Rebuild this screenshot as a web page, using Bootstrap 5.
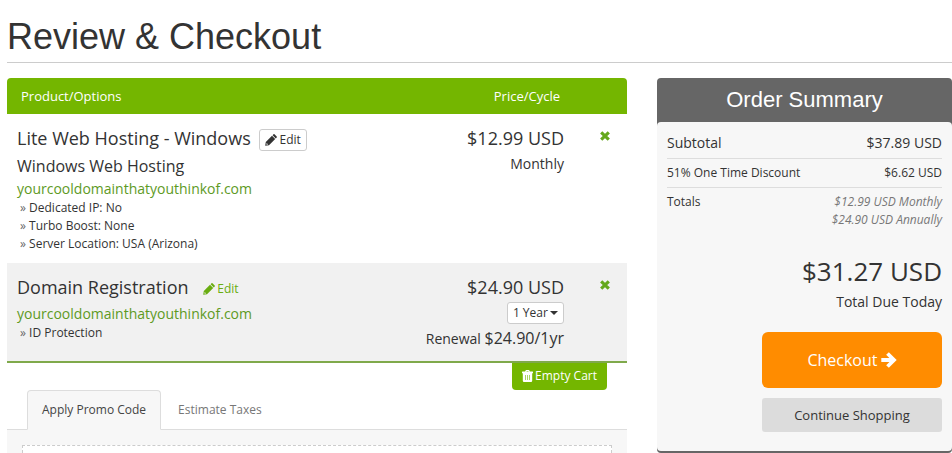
<!DOCTYPE html>
<html lang="en">
<head>
<meta charset="utf-8">
<meta name="viewport" content="width=device-width, initial-scale=1">
<title>Review &amp; Checkout</title>
<link href="https://cdn.jsdelivr.net/npm/bootstrap@5.3.0/dist/css/bootstrap.min.css" rel="stylesheet">
<style>
  body { font-family: "Open Sans", "Noto Sans", sans-serif; font-size: 12px; line-height: 18px; color: #333; background: #fff; }
  .page { padding: 16px 0 0 7px; }
  .page-title { font: 36px/42px "Liberation Sans", Arial, sans-serif; padding-bottom: 4px; margin-bottom: 15px; border-bottom: 1px solid #ccc; color: #333; }
  .page-grid { display: grid; grid-template-columns: minmax(0, 620fr) minmax(0, 295fr); gap: 30px; }

  .cart-table { border-collapse: separate; border-spacing: 0; border-bottom: 2px solid #7fa94b; }
  .cart-table th { background: #74b600; color: #fff; font-weight: 400; font-size: 13px; height: 36px; padding: 0 14px; vertical-align: middle; }
  .cart-table th:first-child { border-top-left-radius: 4px; }
  .cart-table th:last-child { border-top-right-radius: 4px; width: 53px; }
  .cart-table td { vertical-align: top; padding: 10px; }
  .cart-table td:last-child { padding-right: 17px; }
  .cart-table .alt-row td { background: #f1f1f1; }
  .item-title, .item-price { font-size: 18px; line-height: 28px; }
  .item-group { font-size: 16px; line-height: 28px; }
  .item-domain { display: block; font-size: 14px; color: #5e9a1f; text-decoration: none; }
  .item-options { list-style: none; margin: 0; padding: 1px 0 0 3px; }
  .item-options li::before { content: "» "; color: #666; }
  .item-cycle, .item-renewal { font-size: 14px; line-height: 24px; }
  .item-renewal { padding-top: 2px; }
  .item-renewal span { font-size: 16px; }
  .small-btn { font-size: 12px; line-height: 18px; padding: 1px 5px; background: #fff; border: 1px solid #ccc; border-radius: 3px; color: #333; vertical-align: middle; }
  .small-btn svg { vertical-align: -2px; margin-right: -1px; }
  .link-btn { border-color: transparent; background: transparent; color: #69ad10; }
  .cycle-btn { margin-top: 1px; }
  .cycle-btn .caret { display: inline-block; border: 4px solid transparent; border-top-color: #333; border-bottom: 0; vertical-align: 2px; margin-left: -1px; }
  .remove-btn { display: block; padding: 2px 0 0; border: 0; background: none; line-height: 18px; color: #64a81c; margin-left: auto; }

  .empty-btn { margin-right: 20px; padding: 4px 10px 5px; border: 0; border-radius: 0 0 4px 4px; background: #74b600; color: #fff; font-size: 12px; line-height: 18px; }
  .empty-btn svg { vertical-align: -2px; margin-right: -1px; }
  .promo-tabs { padding-left: 20px; border-bottom: 1px solid #ddd; }
  .promo-tabs .nav-link { font-size: 12px; line-height: 18px; padding: 10px 14px; color: #777; border-radius: 4px 4px 0 0; }
  .promo-tabs .nav-item + .nav-item { margin-left: 2px; }
  .promo-tabs .nav-link.active { background: #f7f7f7; color: #444; border-color: #ddd #ddd #f7f7f7; }
  .promo-pane { background: #f7f7f7; padding: 15px 15px 0; }
  .promo-box { background: #fff; border: 1px dashed #ccc; border-bottom: 0; }

  .summary { background: #666; border-radius: 4px; padding-bottom: 2px; }
  .summary h2 { font: 22px/44px "Liberation Sans", Arial, sans-serif; color: #fff; text-align: center; margin: 0; }
  .summary-body { background: #f7f7f7; border-radius: 4px; padding: 7px 10px 19px; }
  .sum-row { padding: 5px 0; border-bottom: 1px solid #ddd; }
  .sum-row.first-row { font-size: 14px; padding-bottom: 6px; }
  .sum-row.last-row { border: 0; padding-bottom: 0; }
  .recurring { font-style: italic; color: #777; }
  .total-amount { font-size: 26px; line-height: 36px; margin-top: 24px; }
  .total-label { font-size: 14px; line-height: 26px; }
  .actions { width: 180px; gap: 10px; margin-top: 17px; }
  .checkout-btn { background: #ff8c00; color: #fff; font-size: 16px; line-height: 24px; padding: 16px; border: 0; border-radius: 6px; }
  .checkout-btn svg { vertical-align: -2px; margin-left: -1px; }
  .continue-btn { background: #dcdcdc; color: #333; font-size: 13px; line-height: 18px; padding: 8px; border-radius: 3px; text-decoration: none; text-align: center; }
</style>
</head>
<body>
<svg class="d-none" aria-hidden="true">
  <symbol id="pencil" viewBox="0 0 12 12"><path fill="currentColor" fill-rule="evenodd" d="M.2 11.800.8 8 7 1.800 10.200 5 4 11.200zM1.700 9l-.3 1.300.4.400 1.300-.3zM7.600 1.200 8.500.3q.5-.4 1 0l2.200 2.200q.4.500 0 1l-.9.9z"/></symbol>
  <symbol id="cross" viewBox="0 0 10 10"><path fill="none" stroke="currentColor" stroke-width="3.200" d="M1.200 1.400l7.600 7.200M8.800 1.400 1.200 8.600"/></symbol>
  <symbol id="trash" viewBox="0 0 11 12"><path fill="currentColor" fill-rule="evenodd" d="M3.100 1.400 3.600.4Q3.800 0 4.200 0h2.600q.4 0 .6.400l.5 1h2.600q.5 0 .5.500v1.400H0V1.900q0-.5.500-.5zM4.400 1.400h2.200L6.300.9H4.700zM.8 3.300h9.400v7.400Q10.200 12 9 12H2Q.8 12 .8 10.700zM3 5v5h.6V5zM5.200 5v5h.6V5zM7.400 5v5H8V5z"/></symbol>
  <symbol id="arrow" viewBox="0 0 16 16"><path fill="none" stroke="currentColor" stroke-width="3.800" d="M.3 8h12.500M6.500 1.500 13 8l-6.500 6.500"/></symbol>
</svg>

<main class="page min-vh-100 d-flex flex-column">
  <h1 class="page-title">Review &amp; Checkout</h1>
  <div class="page-grid flex-grow-1">
    <section class="d-flex flex-column" aria-label="Cart">
      <table class="cart-table w-100">
        <thead>
          <tr><th scope="col">Product/Options</th><th scope="col" class="text-end">Price/Cycle</th><th aria-label="Remove"></th></tr>
        </thead>
        <tbody>
          <tr>
            <td>
              <div class="item-title">Lite Web Hosting - Windows <button type="button" class="small-btn ms-1"><svg width="12" height="12"><use href="#pencil"/></svg> Edit</button></div>
              <div class="item-group">Windows Web Hosting</div>
              <a href="#" class="item-domain">yourcooldomainthatyouthinkof.com</a>
              <ul class="item-options"><li>Dedicated IP: No</li><li>Turbo Boost: None</li><li>Server Location: USA (Arizona)</li></ul>
            </td>
            <td class="text-end"><div class="item-price">$12.99 USD</div><div class="item-cycle">Monthly</div></td>
            <td><button type="button" class="remove-btn" aria-label="Remove hosting"><svg width="10" height="10"><use href="#cross"/></svg></button></td>
          </tr>
          <tr class="alt-row">
            <td>
              <div class="item-title">Domain Registration <button type="button" class="small-btn link-btn ms-1"><svg width="12" height="12"><use href="#pencil"/></svg> Edit</button></div>
              <a href="#" class="item-domain pt-1">yourcooldomainthatyouthinkof.com</a>
              <ul class="item-options"><li>ID Protection</li></ul>
            </td>
            <td class="text-end">
              <div class="item-price">$24.90 USD</div>
              <button type="button" class="small-btn cycle-btn">1 Year <span class="caret"></span></button>
              <div class="item-renewal">Renewal <span>$24.90/1yr</span></div>
            </td>
            <td><button type="button" class="remove-btn" aria-label="Remove domain"><svg width="10" height="10"><use href="#cross"/></svg></button></td>
          </tr>
        </tbody>
      </table>
      <div class="d-flex justify-content-end"><button type="button" class="empty-btn"><svg width="11" height="12"><use href="#trash"/></svg> Empty Cart</button></div>
      <ul class="nav nav-tabs promo-tabs">
        <li class="nav-item"><a class="nav-link active" href="#promo" aria-current="page">Apply Promo Code</a></li>
        <li class="nav-item"><a class="nav-link" href="#taxes">Estimate Taxes</a></li>
      </ul>
      <div class="promo-pane flex-grow-1 d-flex" id="promo"><div class="promo-box flex-grow-1"></div></div>
    </section>

    <aside>
      <div class="summary">
        <h2>Order Summary</h2>
        <div class="summary-body">
          <div class="sum-row first-row d-flex justify-content-between"><span>Subtotal</span><span>$37.89 USD</span></div>
          <div class="sum-row d-flex justify-content-between"><span>51% One Time Discount</span><span>$6.62 USD</span></div>
          <div class="sum-row last-row d-flex justify-content-between"><span>Totals</span><div class="recurring text-end"><div>$12.99 USD Monthly</div><div>$24.90 USD Annually</div></div></div>
          <div class="total-amount text-end">$31.27 USD</div>
          <div class="total-label text-end">Total Due Today</div>
          <div class="actions d-flex flex-column ms-auto">
            <button type="button" class="checkout-btn">Checkout <svg width="16" height="16"><use href="#arrow"/></svg></button>
            <a href="#" class="continue-btn">Continue Shopping</a>
          </div>
        </div>
      </div>
    </aside>
  </div>
</main>
<script src="https://cdn.jsdelivr.net/npm/bootstrap@5.3.0/dist/js/bootstrap.bundle.min.js"></script>
</body>
</html>
